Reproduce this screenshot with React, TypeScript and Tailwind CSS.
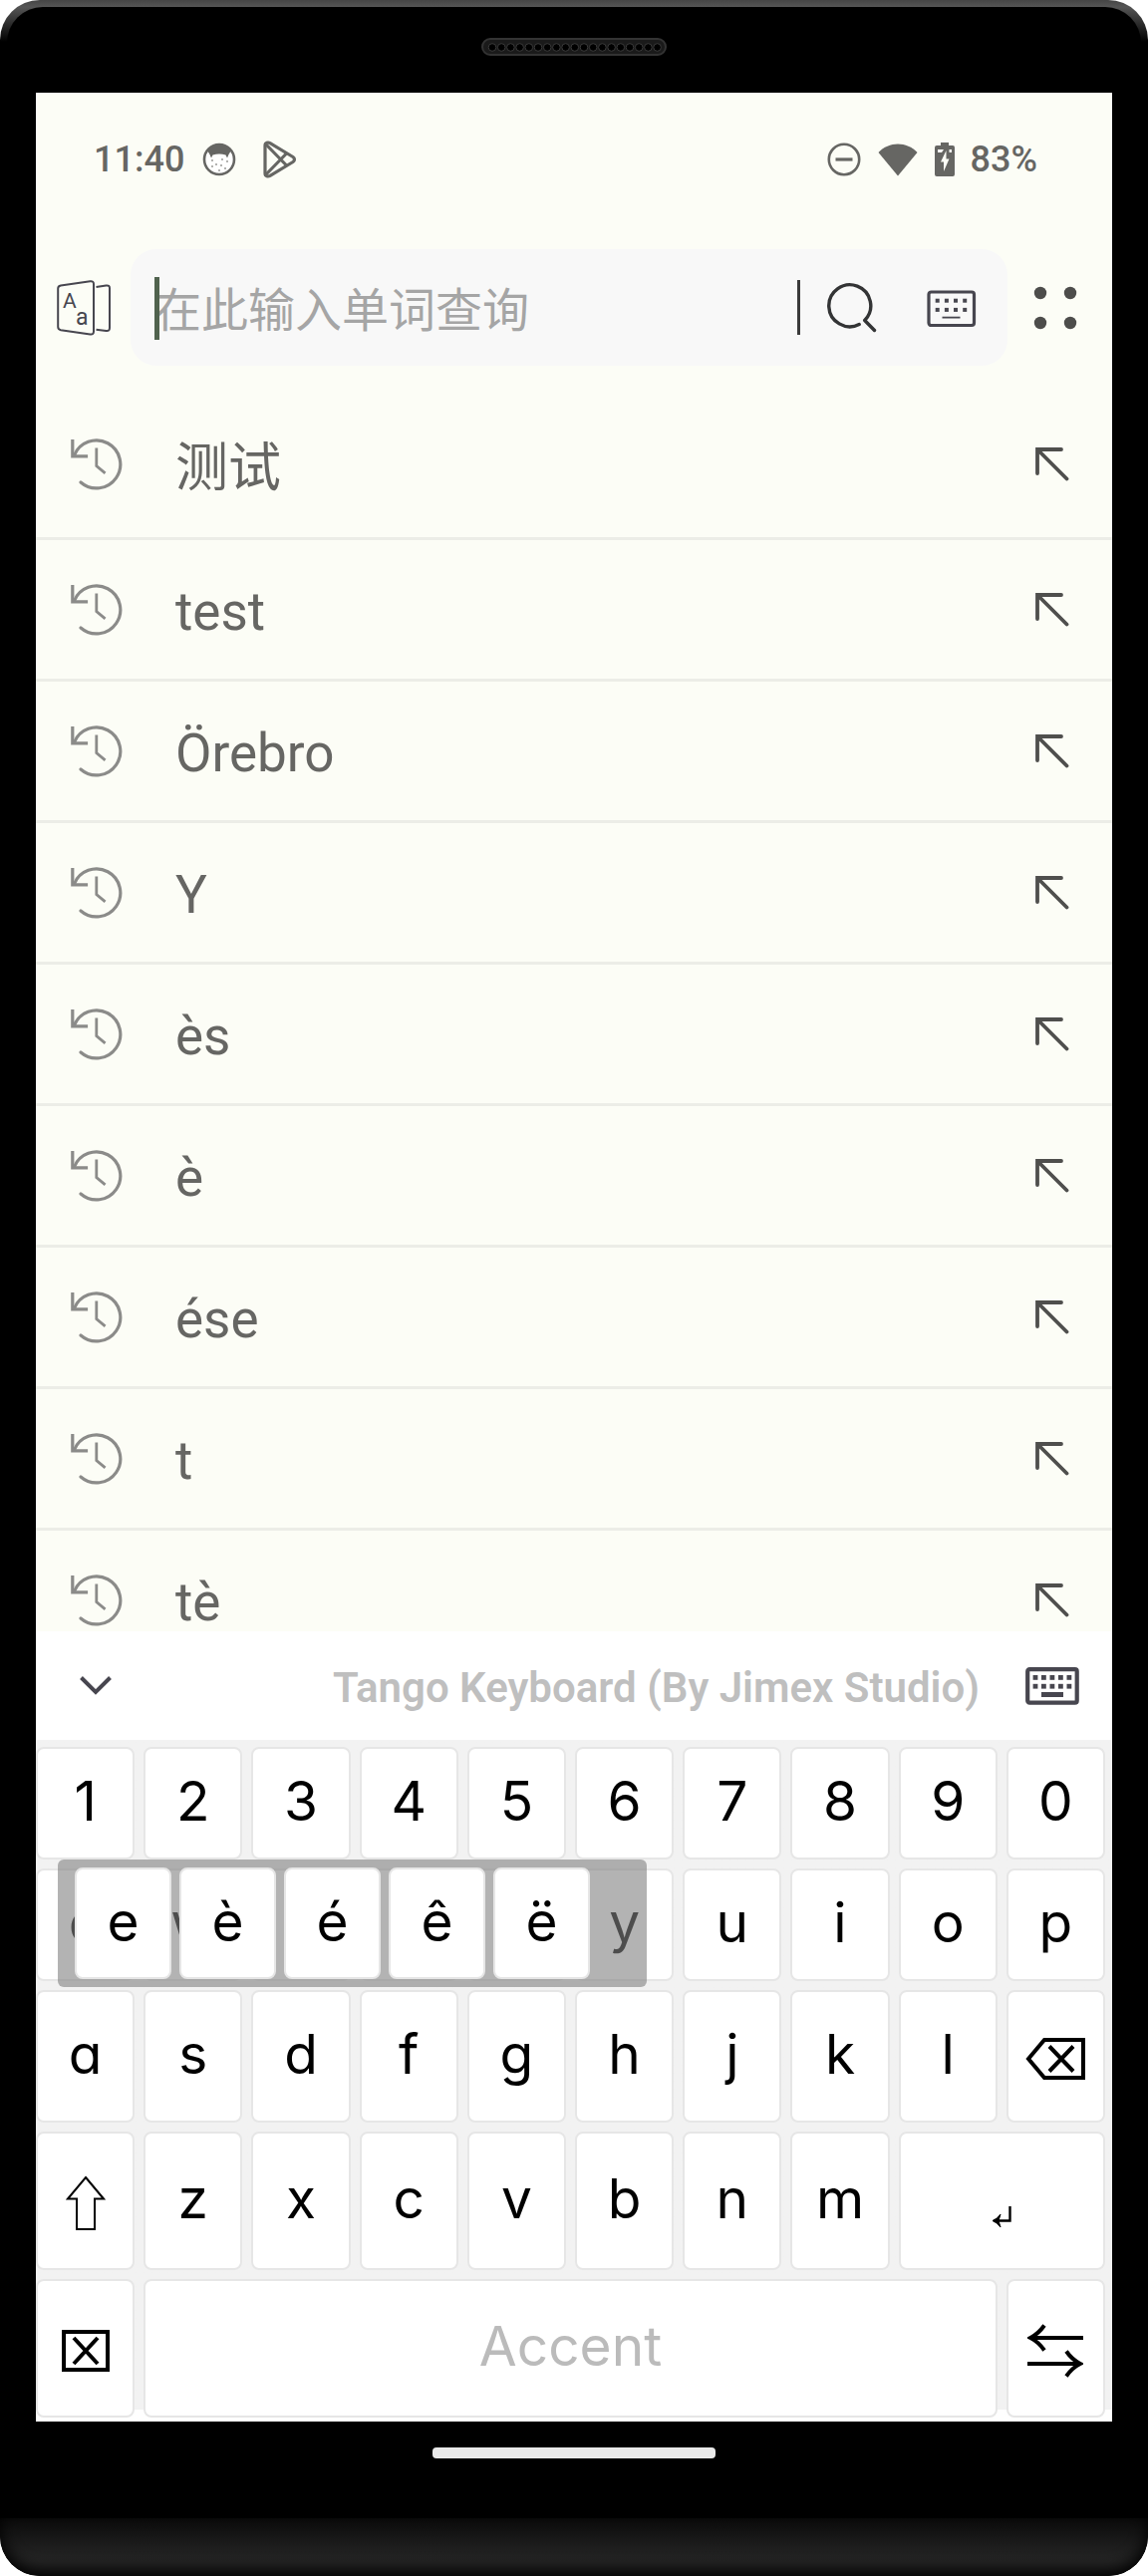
import React, { useState } from 'react';

const history = ['测试', 'test', 'Örebro', 'Y', 'ès', 'è', 'ése', 't', 'tè'];

const numberKeys = ['1', '2', '3', '4', '5', '6', '7', '8', '9', '0'];
const topKeys = ['q', 'w', 'e', 'r', 't', 'y', 'u', 'i', 'o', 'p'];
const homeKeys = ['a', 's', 'd', 'f', 'g', 'h', 'j', 'k', 'l'];
const bottomKeys = ['z', 'x', 'c', 'v', 'b', 'n', 'm'];
const accents = ['e', 'è', 'é', 'ê', 'ë'];

const Speaker = () => (
  <svg width="186" height="18" viewBox="0 0 186 18" aria-hidden="true">
    <rect x="1" y="1" width="184" height="16" rx="8" fill="#1a1a1a" stroke="#333333" strokeWidth="2" />
    {Array.from({ length: 19 }, (_, i) => (
      <circle key={i} cx={11 + i * 9.2} cy="9.5" r="3.8" fill="#000" stroke="#3a3a3a" />
    ))}
  </svg>
);

const CatIcon = () => (
  <svg width="34" height="34" viewBox="0 0 34 34" aria-hidden="true">
    <circle cx="17" cy="17" r="15" fill="#fff" stroke="#666663" strokeWidth="2.6" />
    <path d="M5 8C12 -1 22 -1 29 8L26.500 12L25 15.500L23.500 12.500C19 11 15 11 10.500 12.500L9 15.500L7.500 12Z" fill="#666663" />
    <g fill="#9a9a97">
      <circle cx="10" cy="18" r="1" />
      <circle cx="20" cy="17" r="1" />
      <circle cx="25" cy="19" r="1" />
      <circle cx="14" cy="22" r="1" />
      <circle cx="19" cy="23" r="1" />
      <circle cx="10" cy="24" r="1" />
      <circle cx="23" cy="26" r="1" />
      <circle cx="17" cy="28" r="1" />
    </g>
  </svg>
);

const PlayStoreIcon = () => (
  <svg width="34" height="38" viewBox="0 0 34 38" fill="none" stroke="#666663" strokeWidth="3.2" strokeLinejoin="round" aria-hidden="true">
    <path d="M2 5C2 2 5 1.500 7 2.600L30 16.500C32 18 32 20 30 21.500L7 35.400C5 36.500 2 36 2 33Z" />
    <path d="M3 4L24 25.500M3 34L24 12.500" />
  </svg>
);

const DndIcon = () => (
  <svg width="34" height="34" viewBox="0 0 34 34" fill="none" stroke="#666663" aria-hidden="true">
    <circle cx="17" cy="17" r="15.200" strokeWidth="2.600" />
    <path d="M8.500 17H25.500" strokeWidth="3.200" />
  </svg>
);

const WifiIcon = () => (
  <svg width="40" height="34" viewBox="0 0 40 34" fill="#666663" aria-hidden="true">
    <path d="M20 33.500L.5 10C11 -1.500 29 -1.500 39.500 10Z" />
  </svg>
);

const BatteryIcon = () => (
  <svg width="20" height="34" viewBox="0 0 20 34" aria-hidden="true">
    <path d="M6 0H14V3H18Q20 3 20 5V32Q20 34 18 34H2Q0 34 0 32V5Q0 3 2 3H6Z" fill="#666663" />
    <path d="M11.500 8L6 19.500H9V29L14.500 16.500H11.500Z" fill="#fcfdf6" />
    <path d="M3 7H9L7 10H3ZM14.500 7H17V10H14.500Z" fill="#fcfdf6" />
  </svg>
);

const DictionaryIcon = () => (
  <svg width="54" height="56" viewBox="0 0 54 56" fill="none" stroke="#47464f" strokeWidth="2" strokeLinejoin="round" aria-hidden="true">
    <path d="M4 5.500L33.500 1.200Q37 .8 37 4V51.500Q37 55 33.500 54.500L4 50.200Q1.200 49.500 1.200 47V8.500Q1.200 6 4 5.500Z" />
    <path d="M39.500 7L49.500 5.500Q53 5 53 8V48Q53 51.500 49.500 51L39.500 49.700" />
    <g fill="#47464f" stroke="none" className="font-[Roboto,sans-serif]">
      <text x="6" y="28" fontSize="21">A</text>
      <text x="19" y="45" fontSize="23">a</text>
    </g>
  </svg>
);

const SearchIcon = () => (
  <svg width="52" height="52" viewBox="0 0 52 52" fill="none" stroke="#333435" strokeWidth="3.400" strokeLinecap="round" strokeLinejoin="round" aria-hidden="true">
    <path d="M33.200 42.500A21 21 0 1 1 38.700 38.500L48.500 48.500" />
  </svg>
);

const KeyboardOutlineIcon = () => (
  <svg width="50" height="38" viewBox="0 0 50 38" fill="#47464f" aria-hidden="true">
    <rect x="2" y="2" width="45.500" height="33.500" rx="2.500" fill="none" stroke="#47464f" strokeWidth="3.200" />
    {[10.700, 19.900, 29, 38.200].map((x) => (
      <g key={x}>
        <rect x={x - 2} y="8.700" width="4" height="4" />
        <rect x={x - 2} y="17.900" width="4" height="4" />
      </g>
    ))}
    <rect x="15.500" y="26.700" width="18" height="1.800" />
  </svg>
);

const KeyboardIcon = () => (
  <svg width="54" height="38" viewBox="0 0 54 38" fill="#47464f" aria-hidden="true">
    <rect x="2.200" y="2.200" width="49.500" height="33.500" rx="2" fill="none" stroke="#47464f" strokeWidth="4.200" />
    {[10, 18.400, 26.900, 35.400, 43.900].map((x) => (
      <g key={x}>
        <rect x={x - 2.400} y="8" width="4.800" height="4.800" />
        <rect x={x - 2.400} y="16.800" width="4.800" height="4.800" />
      </g>
    ))}
    <rect x="16" y="25" width="22" height="5" />
  </svg>
);

const DotsIcon = () => (
  <svg width="44" height="44" viewBox="0 0 44 44" fill="#4d4d4b" aria-hidden="true">
    <circle cx="7" cy="7" r="6.200" />
    <circle cx="37" cy="7" r="6.200" />
    <circle cx="7" cy="37" r="6.200" />
    <circle cx="37" cy="37" r="6.200" />
  </svg>
);

const HistoryIcon = () => (
  <svg width="52" height="52" viewBox="0 0 52 52" fill="none" stroke="#8b8b89" strokeWidth="3.200" strokeLinecap="round" aria-hidden="true">
    <path d="M10 44A24 24 0 1 0 3.500 17" />
    <path d="M1.800 2.500V17.800H15.500" strokeLinecap="square" />
    <path d="M25.800 11V27.500L33.500 34" strokeWidth="2.800" strokeLinecap="square" />
  </svg>
);

const FillArrowIcon = () => (
  <svg width="34" height="34" viewBox="0 0 34 34" fill="none" stroke="#4f4f4d" strokeWidth="3.800" strokeLinecap="round" aria-hidden="true">
    <path d="M26 2H2V26M3 3L31.500 31.500" />
  </svg>
);

const ChevronIcon = () => (
  <svg width="32" height="20" viewBox="0 0 32 20" fill="none" stroke="#47464f" strokeWidth="4" aria-hidden="true">
    <path d="M1.500 1.500L16 16L30.500 1.500" />
  </svg>
);

const BackspaceIcon = () => (
  <svg width="60" height="44" viewBox="0 0 60 44" fill="none" stroke="#000" strokeWidth="4" aria-hidden="true">
    <path d="M3 22L19 3H58V41H19Z" />
    <path d="M24 9.500L48 34.500M48 9.500L24 34.500" />
  </svg>
);

const ShiftIcon = () => (
  <svg width="40" height="56" viewBox="0 0 40 56" fill="none" stroke="#000" strokeWidth="2" aria-hidden="true">
    <path d="M20 2L38 23.500H29V54H11V23.500H2Z" />
  </svg>
);

const BoxedXIcon = () => (
  <svg width="48" height="42" viewBox="0 0 48 42" fill="none" stroke="#000" strokeWidth="4" aria-hidden="true">
    <path d="M2 2H46V40H2Z" />
    <path d="M12 8L36 34M36 8L12 34" />
  </svg>
);

const SwapIcon = () => (
  <svg width="56" height="54" viewBox="0 0 56 54" fill="none" stroke="#000" strokeWidth="4" aria-hidden="true">
    <path d="M56 14H3M17 1.500Q11 10 3 14Q11 18 17 26.500" />
    <path d="M0 40H53M39 27.500Q45 36 53 40Q45 44 39 52.500" />
  </svg>
);

const ReturnIcon = () => (
  <svg width="20" height="24" viewBox="0 0 20 24" fill="none" stroke="#000" strokeWidth="2.400" aria-hidden="true">
    <path d="M18.500 1V15.500H2" />
    <path d="M9 9Q6 13.500 1 15.500Q6 17.500 9 22L7 15.500Z" fill="#000" strokeWidth="1" />
  </svg>
);

type KeyProps = {
  children: React.ReactNode;
  label?: string;
  className?: string;
};

const Key = ({ children, label, className = 'pb-1' }: KeyProps) => (
  <button
    type="button"
    aria-label={label}
    className={`flex items-center justify-center rounded-lg border-2 border-[#e6e6e6] bg-white ${className}`}
  >
    {children}
  </button>
);

const AccentPopup = () => (
  <div className="absolute top-[120px] left-[22px] flex h-32 w-[591px] gap-2 rounded-md bg-[#808080]/60 py-2 pl-[17px]">
    {accents.map((accent) => (
      <button
        key={accent}
        type="button"
        className="flex w-[97px] items-center justify-center rounded-lg border-2 border-[#e6e6e6] bg-white pb-1"
      >
        {accent}
      </button>
    ))}
  </div>
);

const Keyboard = () => (
  <section aria-label="Keyboard" className="bg-white">
    <div className="flex h-[109px] items-center pr-[33px] pl-11">
      <button type="button" aria-label="Hide keyboard">
        <ChevronIcon />
      </button>
      <p className="flex-1 pt-1 pr-[46px] text-right font-[Roboto,sans-serif] text-[42px] font-semibold text-[#bfbfbf]">
        Tango Keyboard (By Jimex Studio)
      </p>
      <button type="button" aria-label="Switch keyboard">
        <KeyboardIcon />
      </button>
    </div>

    <div className="relative bg-linear-to-t from-white from-[12px] to-[#f2f2f2] to-[12px] pt-[7px] pr-[7px] pb-1 font-[Inter,sans-serif] text-[55px] leading-none text-black [font-feature-settings:'cv11']">
      <div className="grid grid-cols-10 grid-rows-[113px_113px_133px_139px_139px] gap-[9px]">
        {numberKeys.map((key) => (
          <Key key={key}>{key}</Key>
        ))}
        {topKeys.map((key) => (
          <Key key={key}>{key}</Key>
        ))}
        {homeKeys.map((key) => (
          <Key key={key}>{key}</Key>
        ))}
        <Key label="Backspace" className="pt-1">
          <BackspaceIcon />
        </Key>
        <Key label="Shift" className="pt-1">
          <ShiftIcon />
        </Key>
        {bottomKeys.map((key) => (
          <Key key={key}>{key}</Key>
        ))}
        <Key label="Enter" className="col-span-2 pt-8">
          <ReturnIcon />
        </Key>
        <Key label="Clear" className="pt-1">
          <BoxedXIcon />
        </Key>
        <Key className="col-span-8 pb-1 text-[#bbbbbb]">Accent</Key>
        <Key label="Swap layout" className="pt-1">
          <SwapIcon />
        </Key>
      </div>
      <AccentPopup />
    </div>
  </section>
);

const StatusBar = () => (
  <div className="flex h-[134px] shrink-0 items-center justify-between pr-[75px] pl-[58px] font-[Roboto,sans-serif] text-[36px] font-medium text-[#666663]">
    <div className="flex items-center">
      <span>11:40</span>
      <span className="ml-[18px] flex items-center gap-[27px]">
        <CatIcon />
        <PlayStoreIcon />
      </span>
    </div>
    <div className="flex items-center">
      <span className="mr-4 flex items-center gap-[17px]">
        <DndIcon />
        <WifiIcon />
        <BatteryIcon />
      </span>
      <span>83%</span>
    </div>
  </div>
);

const SearchBar = () => {
  const [query, setQuery] = useState('');

  return (
    <header className="flex shrink-0 items-center pt-[23px] pr-[35px] pb-[25px] pl-[21px]">
      <button type="button" aria-label="Dictionary">
        <DictionaryIcon />
      </button>
      <div className="ml-5 flex h-[117px] min-w-0 flex-1 items-center rounded-[26px] bg-[#f8f8f8] pr-[31px] pl-6">
        <div className="relative min-w-0 flex-1">
          <span className="absolute top-1 left-0 h-[63px] w-[5px] bg-[#50624e]" />
          <input
            type="text"
            aria-label="在此输入单词查询"
            placeholder="在此输入单词查询"
            value={query}
            onChange={(e) => setQuery(e.target.value)}
            className="h-[70px] w-full bg-transparent pt-2 font-[Roboto,'Noto_Sans_CJK_SC',sans-serif] text-[47px] text-[#4f4f4d] outline-none placeholder:text-[#a5a5a5]"
          />
        </div>
        <span className="h-[55px] w-[3px] bg-[#3a3a3a]" />
        <button type="button" aria-label="Search" className="ml-[26px]">
          <SearchIcon />
        </button>
        <button type="button" aria-label="Keyboard input" className="ml-[49px] pt-0.5">
          <KeyboardOutlineIcon />
        </button>
      </div>
      <button type="button" aria-label="More" className="ml-[26px]">
        <DotsIcon />
      </button>
    </header>
  );
};

const HistoryList = () => (
  <ul className="min-h-0 flex-1 overflow-hidden">
    {history.map((word, index) => (
      <li
        key={word}
        className={`flex items-center border-b-[3px] border-[#ecede7] pr-[43px] pl-[35px] ${index === 0 ? 'h-[150px]' : 'h-[142px]'}`}
      >
        <HistoryIcon />
        <span
          className={`ml-[53px] flex-1 font-[Roboto,'Noto_Sans_CJK_SC',sans-serif] text-[53px] leading-[64px] text-[#666663] ${index === 0 ? 'pt-2' : 'pt-1'}`}
        >
          {word}
        </span>
        <button type="button" aria-label={`Fill in ${word}`}>
          <FillArrowIcon />
        </button>
      </li>
    ))}
  </ul>
);

const App: React.FC = () => {
  return (
    <div className="h-screen bg-white">
      <div className="flex h-full flex-col overflow-hidden rounded-[40px] bg-[linear-gradient(to_bottom,#454545_0,#555555_7px,#000000_42px)]">
        {/* Top bezel */}
        <div className="mx-[7px] mt-[7px] flex h-[86px] shrink-0 justify-center rounded-t-[36px] bg-black pt-[31px]">
          <Speaker />
        </div>

        {/* Screen */}
        <main className="mx-9 flex min-h-0 flex-1 flex-col bg-[#fcfdf6]">
          <StatusBar />
          <SearchBar />
          <HistoryList />
          <Keyboard />
        </main>

        {/* Bottom bezel */}
        <div className="flex h-[97px] shrink-0 justify-center pt-[26px]">
          <div className="h-[11px] w-[284px] rounded bg-[#e9e9e9]" />
        </div>
        <div className="h-[58px] shrink-0 rounded-b-[40px] bg-[linear-gradient(to_bottom,#0b0b0b,#262626_75%)] shadow-[inset_0_-6px_16px_#000000]" />
      </div>
    </div>
  );
};

export default App;
